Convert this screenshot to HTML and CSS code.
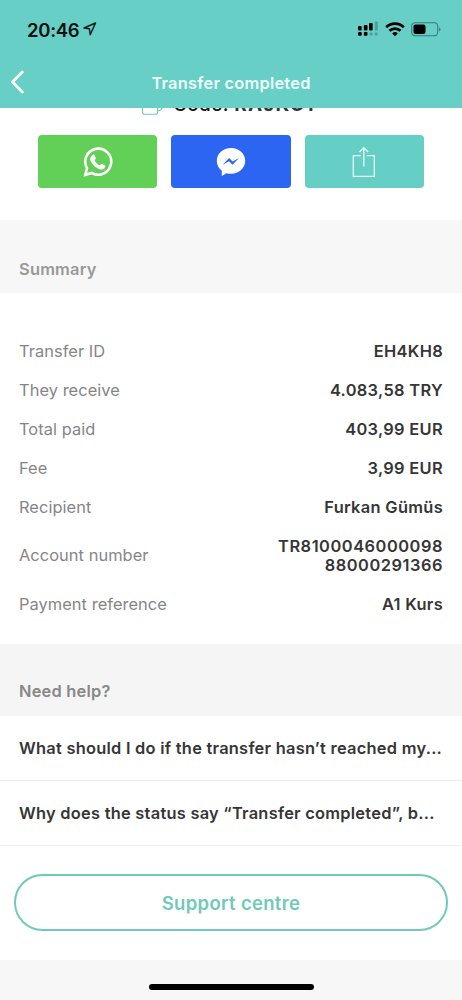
FILE: index.html
```html
<!DOCTYPE html>
<html lang="en">
<head>
<meta charset="utf-8">
<meta name="viewport" content="width=device-width, initial-scale=1">
<title>Transfer completed</title>
<link rel="stylesheet" href="styles.css">
</head>
<body>
<div class="screen">
  <header class="header">
    <div class="status">
      <div class="status-left">
        <span class="clock">20:46</span>
        <svg class="location" width="14" height="14" viewBox="0 0 14 14"><path d="M12.5 1 1 6l5.4.8.8 5.9z" fill="none" stroke="#06201f" stroke-width="1.5" stroke-linejoin="round"/></svg>
      </div>
      <div class="status-right">
        <svg width="21" height="16" viewBox="0 0 21 16">
          <g fill="#000"><rect x="0" y="5" width="3.7" height="4.5" rx="1"/><rect x="5.8" y="4" width="3.7" height="5.5" rx="1"/><rect x="11" y="2" width="3.7" height="7.5" rx="1"/><rect x="0" y="11" width="3.7" height="3.8" rx="1"/><rect x="5.8" y="11" width="3.7" height="3.8" rx="1"/></g>
          <g fill="#46a39b"><rect x="16.8" y="0.5" width="3" height="9" rx="1"/><rect x="11.6" y="11.5" width="3" height="3" rx="1"/><rect x="16.8" y="11.5" width="3" height="3" rx="1"/></g>
        </svg>
        <svg class="wifi" width="20" height="15" viewBox="0 0 20 15"><g fill="none" stroke="#000" stroke-width="2.7"><path d="M1.2 5.3a12.6 12.6 0 0 1 17.6 0"/><path d="M4.5 8.8a7.9 7.9 0 0 1 11 0"/></g><path d="M10 14.2 7.2 11.4a4 4 0 0 1 5.6 0z"/></svg>
        <svg class="battery" width="30" height="15" viewBox="0 0 30 15"><rect x=".7" y=".7" width="26" height="13.1" rx="3.6" fill="none" stroke="#327f79" stroke-width="1.1"/><rect x="2.5" y="2.4" width="12" height="9.6" rx="2" fill="#000"/><path d="M28.1 5.2v4.2q1.4-.8 1.4-2.1t-1.4-2.1z" fill="#327f79"/></svg>
      </div>
    </div>
    <div class="navbar">
      <svg class="back" width="14" height="24" viewBox="0 0 14 24"><path d="M12.3 2 2.4 12l9.9 10" fill="none" stroke="#fff" stroke-width="2.8" stroke-linecap="round" stroke-linejoin="round"/></svg>
      <h1 class="title">Transfer completed</h1>
    </div>
  </header>
  <main class="content">
    <section class="share">
      <div class="code-row">
        <svg width="21" height="21" viewBox="0 0 21 21"><g fill="none" stroke="#6cc9bd" stroke-width="1.1"><rect x=".6" y="5.3" width="15" height="15" rx="2.4"/><path d="M5.5 5V3A2.2 2.2 0 0 1 7.7.8h10A2.2 2.2 0 0 1 19.9 3v10.5q0 3-4 3.2"/></g></svg>
        <span class="code">Code: <b>RAJKGT</b></span>
      </div>
      <div class="share-buttons">
        <div class="share-button whatsapp">
          <svg width="30" height="30" viewBox="0 0 30 30"><path d="M2.3 27.8 4 21.2A13 13 0 1 1 8.9 26z" fill="none" stroke="#fff" stroke-width="2.6"/><path d="M9.4 8.1c.8-.8 1.7-.8 2.1 0l1.3 3c.3.8-.9 1.8-1.2 2.2.9 2.3 2.8 4 5.1 5.1.5-.4 1.4-1.9 2.2-1.6l3 1.5c.8.5.1 2.5-.6 3.1-1.6 1.4-4.1 1.2-6.3.1-3.5-1.6-7-5.2-7.8-8.7-.3-1.7.8-3.5 2.2-4.7z" fill="#fff"/></svg>
        </div>
        <div class="share-button messenger">
          <svg width="30" height="30" viewBox="0 0 30 30"><path d="M15 .9C7 .9.8 6.4.8 13.8c0 4.1 1.9 7.6 5 10v5.1l4.7-2.7c1.4.4 2.9.6 4.5.6 8 0 14.2-5.6 14.2-13S23 .9 15 .9z" fill="#fff"/><path d="m6.7 17.8 6.4-6.8 3.5 3.6 6.4-3.6-6.5 6.8-3.5-3.6z" fill="#2b65f1"/></svg>
        </div>
        <div class="share-button export">
          <svg width="24" height="32" viewBox="0 0 24 32"><path d="M9 9.7H1.3v20.6h21V9.7h-7.7M11.8 20.5V1.8M7.5 6l4.3-4.3L16.1 6" fill="none" stroke="#e5fffa" stroke-width="1.3"/></svg>
        </div>
      </div>
    </section>
    <h2 class="band summary">Summary</h2>
    <dl class="details">
      <div class="detail"><dt>Transfer ID</dt><dd>EH4KH8</dd></div>
      <div class="detail"><dt>They receive</dt><dd>4.083,58 TRY</dd></div>
      <div class="detail"><dt>Total paid</dt><dd>403,99 EUR</dd></div>
      <div class="detail"><dt>Fee</dt><dd>3,99 EUR</dd></div>
      <div class="detail"><dt>Recipient</dt><dd>Furkan Gümüs</dd></div>
      <div class="detail"><dt>Account number</dt><dd class="iban">TR8100046000098<br>88000291366</dd></div>
      <div class="detail"><dt>Payment reference</dt><dd>A1 Kurs</dd></div>
    </dl>
    <h2 class="band help">Need help?</h2>
    <div class="question">What should I do if the transfer hasn’t reached my...</div>
    <div class="question">Why does the status say “Transfer completed”, b...</div>
    <div class="support"><div class="support-button">Support centre</div></div>
  </main>
  <footer class="footer"><div class="home-bar"></div></footer>
</div>
</body>
</html>
```
FILE: styles.css
```css
* { box-sizing: border-box; }
body { margin: 0; background: #fff; font-family: Inter, "Liberation Sans", sans-serif; color: #363636; }
svg { display: block; flex: none; }
.screen { width: 462px; height: 1000px; display: flex; flex-direction: column; overflow: hidden; }

.header { height: 108px; flex: none; background: #67cfc5; }
.status { height: 58px; display: flex; justify-content: space-between; padding: 0 21px 0 27px; }
.status-left { display: flex; align-items: center; gap: 4px; height: 59px; }
.clock { font-size: 18.5px; font-weight: 600; color: #08100f; letter-spacing: -0.3px; }
.location { margin-top: -1px; }
.status-right { display: flex; align-items: center; gap: 6px; height: 58px; }
.navbar { height: 50px; display: grid; grid-template-columns: 40px 1fr 40px; align-items: center; }
.back { margin: -2px 0 0 10px; }
.title { margin: 0; font-size: 16.4px; line-height: 20px; font-weight: 600; letter-spacing: 0.23px; color: #edfffc; text-align: center; }

.content { flex: none; height: 852px; overflow: hidden; }
.share { height: 112px; overflow: hidden; }
.code-row { height: 21px; margin: -14px 0 20px 142px; display: flex; align-items: center; gap: 10px; }
.code { font-size: 19px; line-height: 21px; color: #111; font-weight: 500; letter-spacing: 0.35px; white-space: nowrap; }
.code b { font-weight: 700; color: #333; letter-spacing: 1.2px; }
.share-buttons { display: grid; grid-template-columns: repeat(3, 1fr); gap: 14px; padding: 0 38px; }
.share-button { height: 53px; border-radius: 4px; display: flex; align-items: center; justify-content: center; }
.whatsapp { background: #62cf57; }
.messenger { background: #2b65f1; }
.export { background: #65cfc5; }

.band { margin: 0; padding: 39px 19px 0; background: #f7f7f7; color: #999; font-size: 16.4px; line-height: 20px; font-weight: 600; letter-spacing: 0.22px; }
.summary { height: 73px; }
.help { height: 72px; padding-top: 37px; background: #f5f5f5; color: #888; }
.details { margin: 0; height: 351px; padding: 48.7px 19px 0; display: flex; flex-direction: column; gap: 19.5px; font-size: 16.4px; line-height: 19.5px; }
.detail { display: flex; justify-content: space-between; align-items: center; }
.detail dt { color: #858585; letter-spacing: 0.06px; }
.detail dd { margin: 0; font-weight: 600; letter-spacing: 0.32px; text-align: right; }
.detail .iban { letter-spacing: 0.53px; }

.question { height: 65px; padding: 0 19px; border-bottom: 1px solid #eee; font-size: 16.4px; line-height: 64px; font-weight: 600; letter-spacing: 0.26px; white-space: nowrap; }
.support { padding: 28px 14px 0; }
.support-button { height: 57px; border: 2px solid #70cab8; border-radius: 29px; color: #70cab8; font-size: 18.5px; font-weight: 600; letter-spacing: 0.32px; line-height: 54px; text-align: center; }

.footer { height: 40px; background: #f7f7f7; display: flex; justify-content: center; padding-top: 24px; }
.home-bar { width: 165px; height: 6px; border-radius: 3px; background: #000; }
```
